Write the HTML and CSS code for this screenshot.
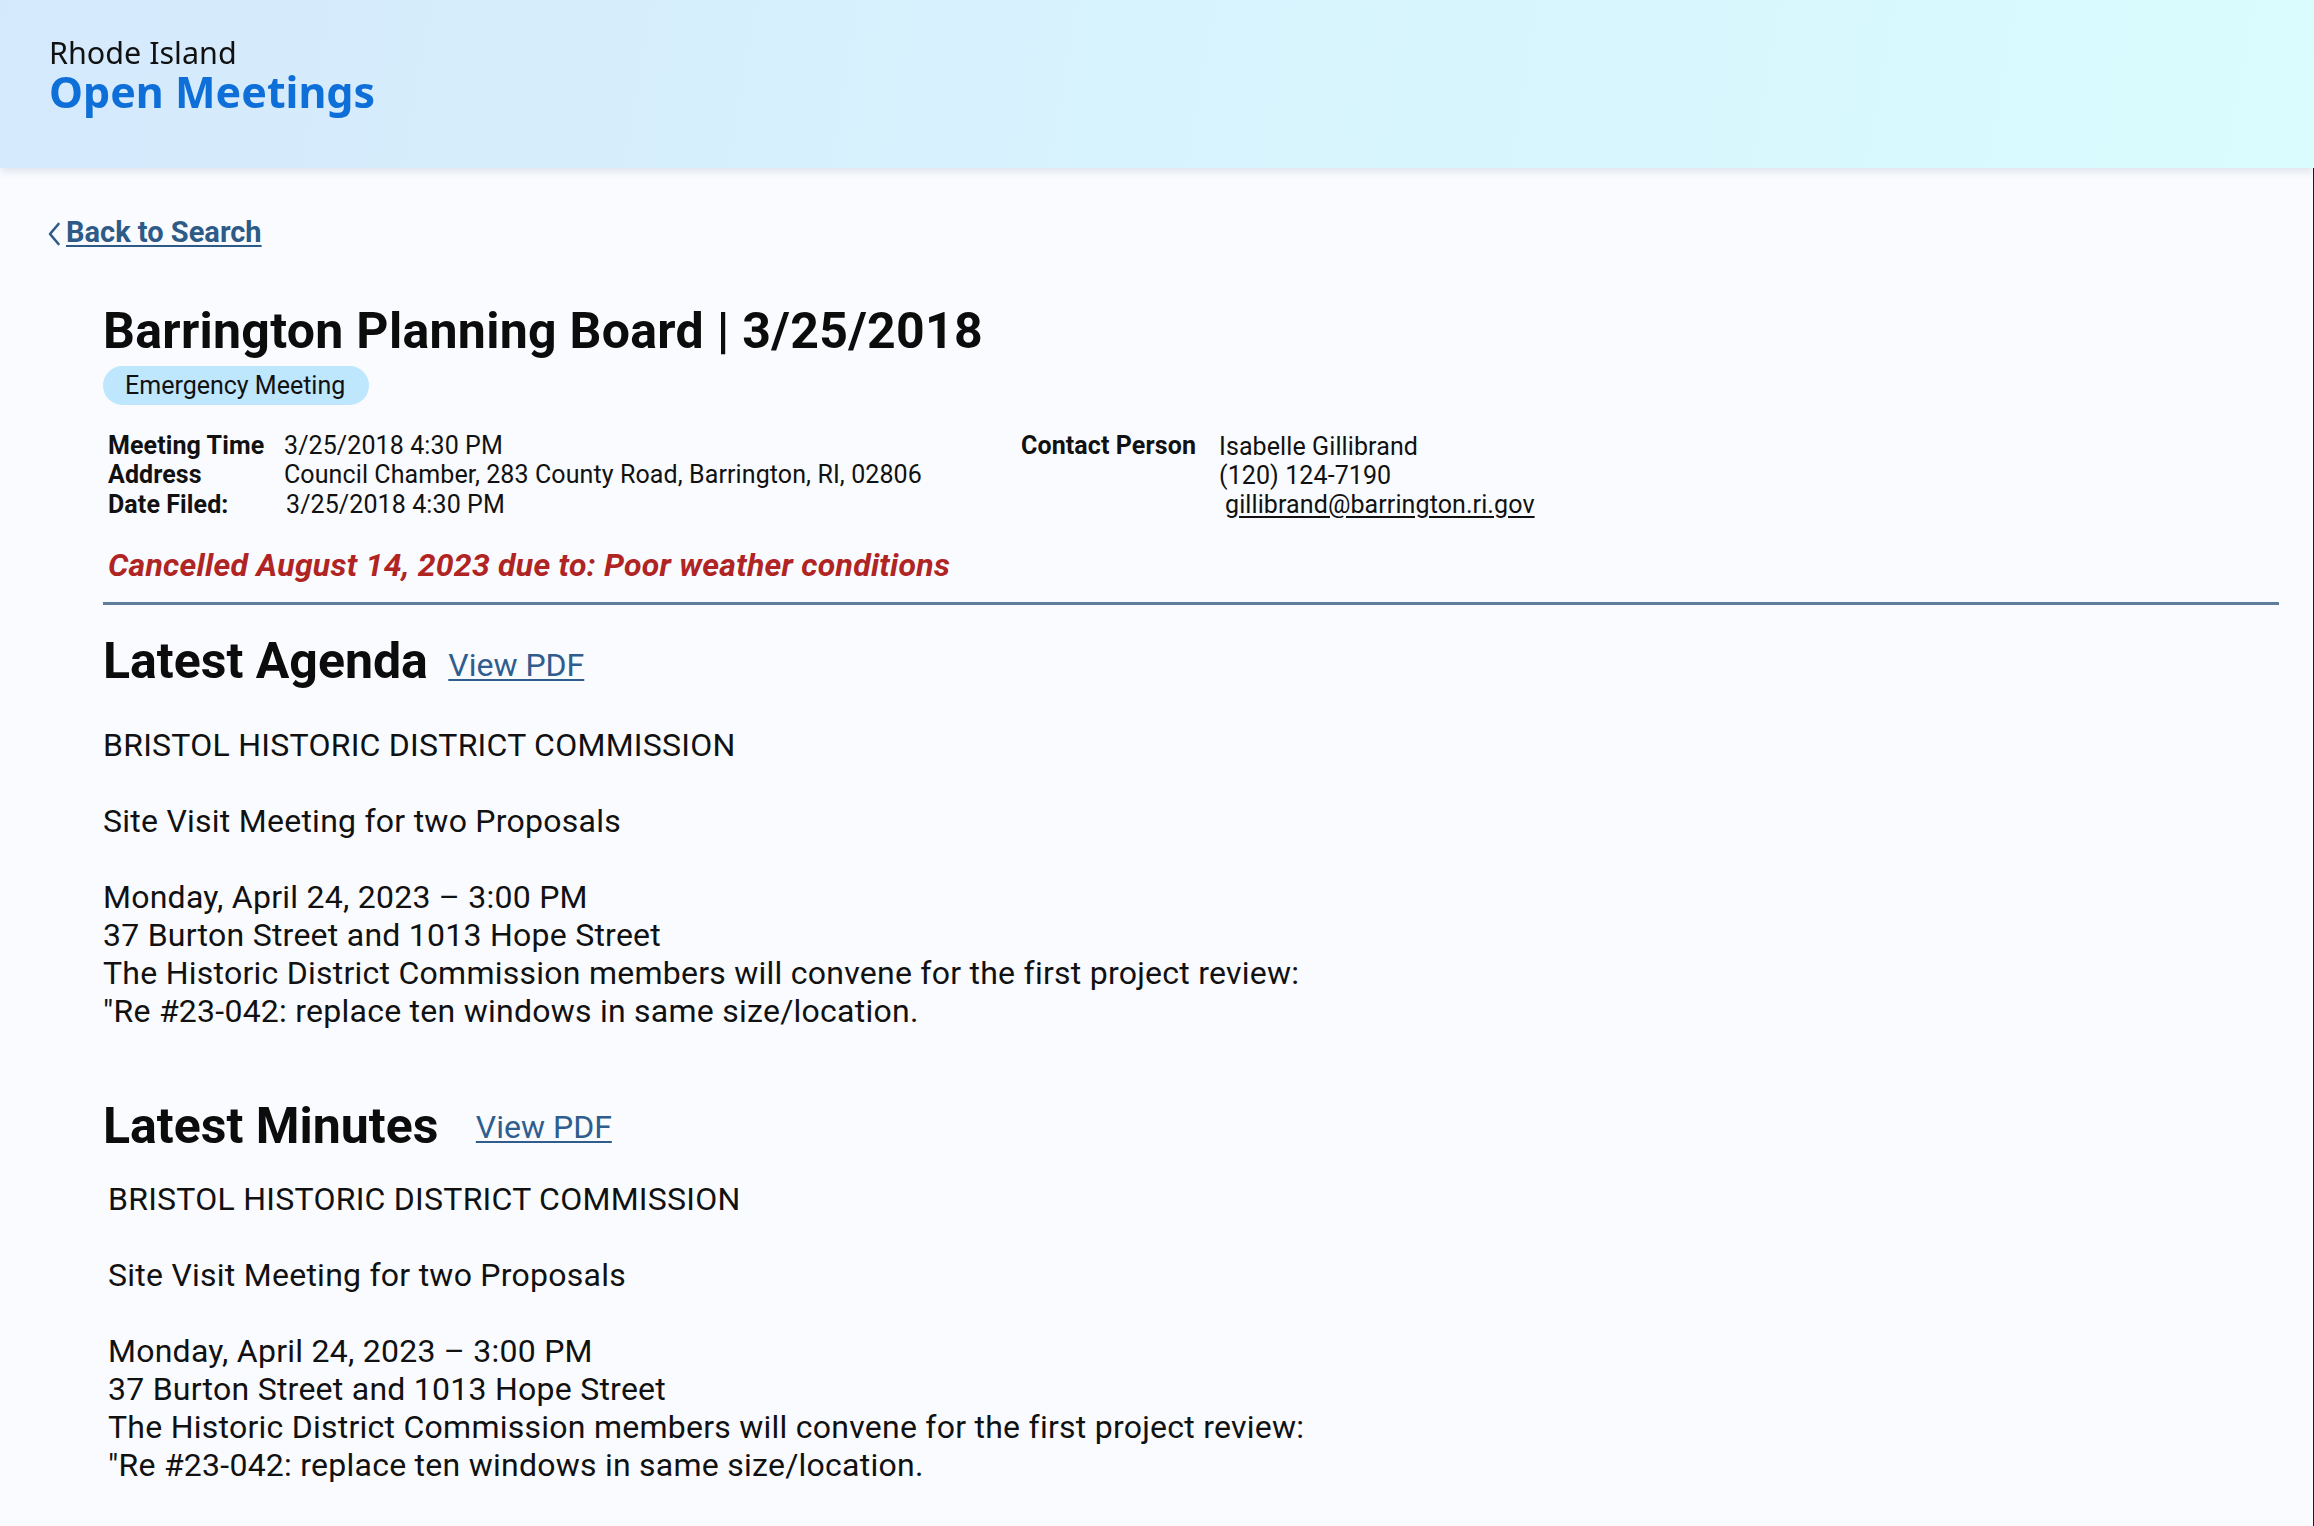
FILE: index.html
```html
<!DOCTYPE html>
<html lang="en">
<head>
<meta charset="utf-8">
<title>Barrington Planning Board | 3/25/2018 - Rhode Island Open Meetings</title>
<link rel="stylesheet" href="styles.css">
</head>
<body>
<header class="site-header">
  <div class="brand">
    <div class="brand-state">Rhode Island</div>
    <div class="brand-title">Open Meetings</div>
  </div>
</header>
<main class="page">
  <a class="back-link" href="#">
    <svg class="back-icon" width="14" height="24" viewBox="0 0 14 24" aria-hidden="true"><path d="M11.5 2 L3 12 L11.5 22" fill="none" stroke="currentColor" stroke-width="2.6" stroke-linecap="round" stroke-linejoin="round"/></svg>
    <span class="back-text">Back to Search</span>
  </a>
  <article class="meeting">
    <h1 class="meeting-title">Barrington Planning Board | 3/25/2018</h1>
    <span class="badge">Emergency Meeting</span>
    <div class="meta">
      <dl class="meta-list">
        <dt>Meeting Time</dt><dd>3/25/2018 4:30 PM</dd>
        <dt>Address</dt><dd>Council Chamber, 283 County Road, Barrington, RI, 02806</dd>
        <dt>Date Filed:</dt><dd class="shift">3/25/2018 4:30 PM</dd>
      </dl>
      <dl class="contact">
        <dt>Contact Person</dt>
        <dd>
          <div>Isabelle Gillibrand</div>
          <div>(120) 124-7190</div>
          <div><a class="email" href="#">gillibrand@barrington.ri.gov</a></div>
        </dd>
      </dl>
    </div>
    <p class="cancelled">Cancelled August 14, 2023 due to: Poor weather conditions</p>
    <hr class="divider">
    <section class="doc doc-agenda">
      <h2 class="doc-heading">Latest Agenda <a class="pdf-link" href="#">View PDF</a></h2>
      <div class="doc-body">
        <p>BRISTOL HISTORIC DISTRICT COMMISSION</p>
        <p>Site Visit Meeting for two Proposals</p>
        <p>Monday, April 24, 2023 – 3:00 PM<br>37 Burton Street and 1013 Hope Street<br>The Historic District Commission members will convene for the first project review:<br>"Re #23-042: replace ten windows in same size/location.</p>
      </div>
    </section>
    <section class="doc doc-minutes">
      <h2 class="doc-heading">Latest Minutes <a class="pdf-link" href="#">View PDF</a></h2>
      <div class="doc-body">
        <p>BRISTOL HISTORIC DISTRICT COMMISSION</p>
        <p>Site Visit Meeting for two Proposals</p>
        <p>Monday, April 24, 2023 – 3:00 PM<br>37 Burton Street and 1013 Hope Street<br>The Historic District Commission members will convene for the first project review:<br>"Re #23-042: replace ten windows in same size/location.</p>
      </div>
    </section>
  </article>
</main>
</body>
</html>
```

FILE: styles.css
```css
* { box-sizing: border-box; }

html, body {
  margin: 0;
  padding: 0;
}

body {
  background: #f9fbff;
  color: #111;
  font-family: Roboto, "Liberation Sans", sans-serif;
  min-height: 1526px;
}

body::after {
  content: "";
  position: fixed;
  top: 0;
  right: 0;
  bottom: 0;
  width: 1px;
  background: #1c1c1c;
}

.site-header {
  height: 168px;
  background: linear-gradient(100deg, #d5e9fc 0%, #d7f3fd 50%, #d9fcfe 100%);
  box-shadow: 0 3px 8px rgba(60, 70, 90, 0.14);
  padding: 35px 0 0 49px;
  position: relative;
  z-index: 1;
}

.brand-state {
  font-family: "Noto Sans", "Open Sans", sans-serif;
  font-size: 30.5px;
  line-height: 34px;
  color: #111;
}

.brand-title {
  font-family: "Noto Sans", "Open Sans", sans-serif;
  font-size: 43px;
  font-weight: 700;
  line-height: 40px;
  margin-top: 3px;
  color: #0f6fd8;
}

.page {
  padding: 48px 35px 40px 47px;
}

.back-link {
  display: inline-flex;
  align-items: center;
  gap: 5px;
  color: #2d5a86;
  text-decoration: none;
  font-size: 29px;
  font-weight: 700;
  line-height: 33px;
}

.back-icon {
  display: block;
  margin-top: 3px;
}

.back-text {
  text-decoration: underline;
  text-decoration-thickness: 2px;
  text-underline-offset: 3px;
}

.meeting {
  padding-left: 56px;
  padding-top: 53px;
}

.meeting-title {
  margin: 0;
  font-size: 50px;
  font-weight: 700;
  line-height: 56px;
  letter-spacing: 0.3px;
  color: #0c0c0c;
}

.badge {
  display: inline-block;
  margin-top: 7px;
  height: 39px;
  line-height: 39px;
  padding: 0 24px 0 22px;
  border-radius: 20px;
  background: #bee6fc;
  font-size: 25px;
  color: #111;
}

.meta {
  display: flex;
  padding-left: 5px;
  margin-top: 26px;
  font-size: 25px;
  line-height: 29px;
  letter-spacing: 0.1px;
}

.meta dl, .meta dd { margin: 0; }

.meta-list {
  display: grid;
  grid-template-columns: 176px auto;
  width: 913px;
  margin: 0;
}

.meta-list dt, .contact dt {
  font-weight: 700;
}

.meta-list dd.shift {
  padding-left: 2px;
}

.contact {
  display: grid;
  grid-template-columns: 198px auto;
  margin: 0;
}

.contact dd {
  padding-top: 1px;
}

.email {
  color: #111;
  margin-left: 6px;
  text-decoration: underline;
  text-underline-offset: 3px;
}

.cancelled {
  margin: 28px 0 0 5px;
  font-size: 32px;
  line-height: 36px;
  font-weight: 700;
  font-style: italic;
  letter-spacing: 0.25px;
  color: #b02424;
}

.divider {
  margin: 19px 0 0 0;
  border: 0;
  height: 3px;
  background: #5f7e9e;
}

.doc-heading {
  margin: 0;
  font-size: 50px;
  font-weight: 700;
  line-height: 56px;
  color: #0c0c0c;
}

.doc-agenda .doc-heading {
  margin-top: 28px;
}

.pdf-link {
  font-size: 32px;
  font-weight: 400;
  line-height: 32px;
  color: #2f5e8e;
  margin-left: 8px;
  position: relative;
  top: -2px;
  text-decoration: underline;
  text-decoration-thickness: 2px;
  text-underline-offset: 3px;
}

.doc-minutes .doc-heading {
  margin-top: 68px;
}

.doc-minutes .pdf-link {
  margin-left: 25px;
  top: -5px;
}

.doc-body {
  font-size: 32px;
  line-height: 38px;
  letter-spacing: 0.25px;
  color: #111;
}

.doc-body p {
  margin: 0 0 38px 0;
}

.doc-body p:last-child {
  margin-bottom: 0;
}

.doc-agenda .doc-body {
  margin-top: 37px;
}

.doc-minutes .doc-body {
  margin-top: 26px;
  padding-left: 5px;
}
```
